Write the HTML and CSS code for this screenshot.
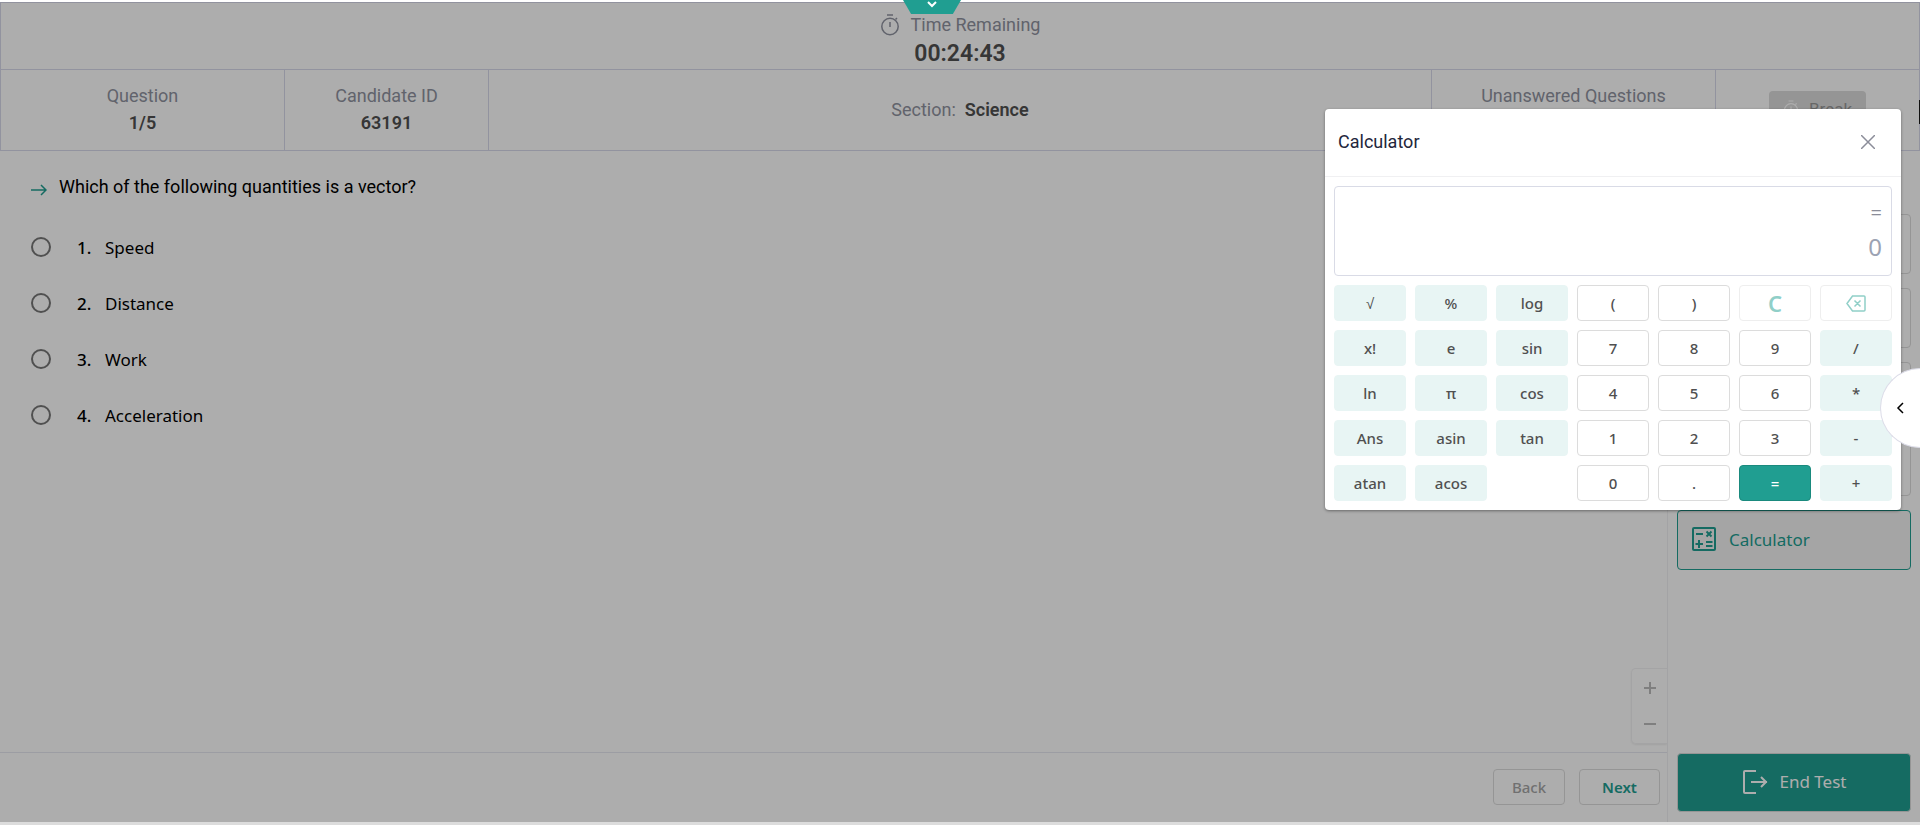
FILE: index.html
```html
<!DOCTYPE html>
<html lang="en">
<head>
  <meta charset="UTF-8" />
  <title>Test - Science</title>
  <link rel="stylesheet" href="styles.css">
</head>
<body>

  <div class="app">
    <header class="header">
      <div class="timer">
        <div class="timer-label">
          <svg width="20" height="22" viewBox="0 0 20 22" fill="none" stroke="currentColor" stroke-width="1.5">
            <path d="M7 1h6M15.5 5.5l1.5-1.5M10 8v5" />
            <circle cx="10" cy="12.5" r="8.2" />
          </svg>
          <span>Time Remaining</span>
        </div>
        <strong class="timer-value">00:24:43</strong>
      </div>
      <div class="info">
        <div class="cell cell-wide"><span>Question</span><strong>1/5</strong></div>
        <div class="cell"><span>Candidate ID</span><strong>63191</strong></div>
        <div class="cell cell-section"><span>Section:</span><strong>Science</strong></div>
        <div class="cell cell-wide"><span>Unanswered Questions</span><strong>5</strong></div>
        <div class="cell">
          <button class="break" type="button" disabled>
            <svg width="16" height="18" viewBox="0 0 20 22" fill="none" stroke="currentColor" stroke-width="1.5">
              <path d="M7 1h6M15.5 5.5l1.5-1.5M10 8v5" />
              <circle cx="10" cy="12.5" r="8.2" />
            </svg>
            <span>Break</span>
          </button>
        </div>
      </div>
    </header>

    <div class="body">
      <main class="main">
        <form class="question">
          <h1>
            <svg width="16" height="12" viewBox="0 0 16 12" fill="none" stroke="currentColor" stroke-width="1.5">
              <path d="M0 6h15M10 1l5 5-5 5" />
            </svg>
            <span>Which of the following quantities is a vector?</span>
          </h1>
          <label class="option"><input type="radio" name="answer"><span class="num">1.</span>Speed</label>
          <label class="option"><input type="radio" name="answer"><span class="num">2.</span>Distance</label>
          <label class="option"><input type="radio" name="answer"><span class="num">3.</span>Work</label>
          <label class="option"><input type="radio" name="answer"><span class="num">4.</span>Acceleration</label>
        </form>
        <div class="zoom">
          <button type="button" aria-label="Zoom in">
            <svg width="12" height="12" viewBox="0 0 12 12" stroke="currentColor" stroke-width="2"><path d="M0 6h12M6 0v12" /></svg>
          </button>
          <button type="button" aria-label="Zoom out">
            <svg width="12" height="12" viewBox="0 0 12 12" stroke="currentColor" stroke-width="2"><path d="M0 6h12" /></svg>
          </button>
        </div>
        <footer class="footer">
          <button class="btn btn-back" type="button">Back</button>
          <button class="btn btn-next" type="button">Next</button>
        </footer>
      </main>

      <aside class="sidebar">
        <button class="tool" type="button" aria-label="Tool 1"></button>
        <button class="tool" type="button" aria-label="Tool 2"></button>
        <button class="tool" type="button" aria-label="Tool 3"></button>
        <button class="tool" type="button" aria-label="Tool 4"></button>
        <button class="tool active" type="button">
          <svg width="24" height="24" viewBox="0 0 24 24" fill="none" stroke="currentColor" stroke-width="2">
            <rect x="1" y="1" width="22" height="22" rx="1" />
            <path d="M4 7h7M14.5 4.5l5 5M19.5 4.5l-5 5M3.500 17H11M7 13v8M14 15h6.500M14 19h6.500" />
          </svg>
          <span>Calculator</span>
        </button>
        <button class="end" type="button">
          <svg width="26" height="26" viewBox="0 0 26 26" fill="none" stroke="currentColor" stroke-width="2">
            <path d="M14 2H3a1 1 0 0 0-1 1v20a1 1 0 0 0 1 1h11M9 13h16M19 8l5 5-5 5" />
          </svg>
          <span>End Test</span>
        </button>
      </aside>
    </div>

    <div class="overlay"></div>
    <span class="marker"></span>

    <section class="calc" aria-label="Calculator">
      <div class="calc-head">
        <h2>Calculator</h2>
        <button class="close" type="button" aria-label="Close">
          <svg width="14" height="14" viewBox="0 0 14 14" stroke="currentColor" stroke-width="1.5"><path d="M0 0l14 14M14 0L0 14" /></svg>
        </button>
      </div>
      <div class="calc-body">
        <div class="display">
          <span class="eq">=</span>
          <output>0</output>
        </div>
        <div class="keys">
          <button class="fn" type="button">√</button>
          <button class="fn" type="button">%</button>
          <button class="fn" type="button">log</button>
          <button type="button">(</button>
          <button type="button">)</button>
          <button class="soft clear" type="button">C</button>
          <button class="soft" type="button" aria-label="Backspace">
            <svg width="20" height="17" viewBox="0 0 20 17" fill="none" stroke="currentColor" stroke-width="1.5">
              <path d="M6.5 1H18a1 1 0 0 1 1 1v13a1 1 0 0 1-1 1H6.5L1 8.5zM8.5 5.5l6 6M14.5 5.5l-6 6" />
            </svg>
          </button>

          <button class="fn" type="button">x!</button>
          <button class="fn" type="button">e</button>
          <button class="fn" type="button">sin</button>
          <button type="button">7</button>
          <button type="button">8</button>
          <button type="button">9</button>
          <button class="fn" type="button">/</button>

          <button class="fn" type="button">ln</button>
          <button class="fn" type="button">π</button>
          <button class="fn" type="button">cos</button>
          <button type="button">4</button>
          <button type="button">5</button>
          <button type="button">6</button>
          <button class="fn" type="button">*</button>

          <button class="fn" type="button">Ans</button>
          <button class="fn" type="button">asin</button>
          <button class="fn" type="button">tan</button>
          <button type="button">1</button>
          <button type="button">2</button>
          <button type="button">3</button>
          <button class="fn" type="button">-</button>

          <button class="fn" type="button">atan</button>
          <button class="fn" type="button">acos</button>
          <span></span>
          <button type="button">0</button>
          <button type="button">.</button>
          <button class="equals" type="button">=</button>
          <button class="fn" type="button">+</button>
        </div>
      </div>
    </section>

    <button class="drawer" type="button" aria-label="Open panel">
      <svg width="8" height="12" viewBox="0 0 8 12" fill="none" stroke="currentColor" stroke-width="1.5"><path d="M7 1L2 6l5 5" /></svg>
    </button>
  </div>

  <button class="tab" type="button" aria-label="Expand">
    <svg width="12" height="8" viewBox="0 0 12 8" fill="none" stroke="currentColor" stroke-width="2"><path d="M2 2l4 4 4-4" /></svg>
  </button>

</body>
</html>
```

FILE: styles.css
```css
* {
  box-sizing: border-box;
}
body {
  margin: 0;
  min-height: 100vh;
  display: flex;
  flex-direction: column;
  padding-bottom: 3px;
  border-top: 2px solid #fff;
  background: #dcdcdc;
  color: #000;
  font-family: "Segoe UI", "Noto Sans", sans-serif;
  font-size: 17px;
}
button {
  font: inherit;
  cursor: pointer;
}
.app {
  position: relative;
  flex: 1;
  display: flex;
  flex-direction: column;
  overflow: hidden;
  background: #fff;
}

/* header */
.header {
  border: 1px solid #d7d9eb;
  font-family: Roboto, sans-serif;
  font-size: 18px;
  line-height: 27px;
  color: #9093a0;
}
.header strong {
  color: #505050;
  font-weight: 600;
}
.timer {
  height: 67px;
  padding-top: 8px;
  display: flex;
  flex-direction: column;
  align-items: center;
  border-bottom: 1px solid #d7d9eb;
}
.timer-label {
  display: flex;
  align-items: center;
  gap: 11px;
}
.timer .timer-value {
  font-size: 23px;
  line-height: 32px;
}
.info {
  display: flex;
  height: 80px;
}
.cell {
  width: 204px;
  display: flex;
  flex-direction: column;
  align-items: center;
  justify-content: center;
  padding-bottom: 2px;
  border-left: 1px solid #d7d9eb;
}
.cell-wide {
  width: 284px;
}
.cell:first-child {
  width: 283px;
  border-left: 0;
}
.cell-section {
  flex: 1;
  flex-direction: row;
  align-items: center;
  gap: 9px;
}
.break {
  width: 97px;
  height: 36px;
  display: flex;
  align-items: center;
  justify-content: center;
  gap: 10px;
  padding: 0;
  border: 0;
  border-radius: 4px;
  background: #dcdcdc;
  color: #fff;
  font-size: 17px;
}
.break span {
  color: #999;
}

/* question */
.body {
  flex: 1;
  display: flex;
}
.main {
  flex: 1;
  display: flex;
  flex-direction: column;
}
.question {
  flex: 1;
  padding: 22px 31px;
}
.question h1 {
  display: flex;
  align-items: center;
  gap: 12px;
  margin: 0 0 18px;
  font: 18px/28px Roboto, sans-serif;
}
.question h1 svg {
  color: #209e91;
  margin-top: 6px;
}
.option {
  display: flex;
  align-items: center;
  height: 56px;
}
.option input {
  appearance: none;
  width: 20px;
  height: 20px;
  margin: 0 26px 0 0;
  border: 2px solid #777;
  border-radius: 50%;
}
.option .num {
  width: 28px;
  font-weight: 500;
}
.zoom {
  align-self: flex-end;
  width: 36px;
  margin-bottom: 8px;
  padding: 1px 0;
  border: 1px solid #f2f2f4;
  border-right: 0;
  border-radius: 5px 0 0 5px;
  box-shadow: 0 1px 2px #eee;
}
.zoom button {
  display: flex;
  align-items: center;
  justify-content: center;
  width: 100%;
  height: 36px;
  padding: 0;
  border: 0;
  background: none;
  color: #bbb;
}
.footer {
  display: flex;
  justify-content: flex-end;
  gap: 14px;
  padding: 16px 7px 17px;
  border-top: 1px solid #e6e7f0;
}
.btn {
  height: 36px;
  width: 72px;
  padding: 0;
  border: 1px solid #dcdcdc;
  border-radius: 4px;
  background: #fff;
  font-size: 15px;
  font-weight: 500;
}
.btn-back {
  color: #a6a6a6;
}
.btn-next {
  width: 81px;
  color: #209e91;
  font-weight: 600;
}

/* sidebar */
.sidebar {
  width: 253px;
  display: flex;
  flex-direction: column;
  gap: 14px;
  padding: 63px 9px 10px;
  border-left: 1px solid #f0f0f4;
}
.tool {
  height: 60px;
  display: flex;
  align-items: center;
  gap: 13px;
  padding: 0 14px 2px;
  border: 1px solid #dcdcdc;
  border-radius: 4px;
  background: #fff;
}
.tool.active {
  border-color: #209e91;
  background: #f4f4f4;
  color: #209e91;
}
.end {
  height: 59px;
  margin-top: auto;
  display: flex;
  align-items: center;
  justify-content: center;
  gap: 12px;
  padding: 0 0 2px;
  border: 1px solid #dcdcdc;
  border-radius: 4px;
  background: #209e91;
  color: #fff;
}
.overlay {
  position: absolute;
  inset: 0;
  background: rgba(0, 0, 0, 0.32);
}
.marker {
  position: absolute;
  top: 98px;
  right: 0;
  width: 1px;
  height: 24px;
  background: #111;
}

/* calculator */
.calc {
  position: absolute;
  top: 107px;
  right: 19px;
  width: 576px;
  border-radius: 4px;
  background: #fff;
  box-shadow: 0 1px 3px rgba(0, 0, 0, 0.4);
}
.calc-head {
  display: flex;
  align-items: center;
  justify-content: space-between;
  height: 68px;
  padding: 0 20px 2px 13px;
  border-bottom: 1px solid #f0f0f2;
}
.calc-head h2 {
  margin: 0;
  font: 18px/28px Roboto, sans-serif;
  color: #23263b;
}
.close {
  display: flex;
  padding: 6px;
  border: 0;
  background: none;
  color: #8b8d99;
}
.calc-body {
  padding: 9px;
}
.display {
  display: flex;
  flex-direction: column;
  align-items: flex-end;
  height: 90px;
  padding: 9px;
  margin-bottom: 9px;
  border: 1px solid #d9dbe6;
  border-radius: 4px;
  color: #9ca3b3;
  font-size: 24px;
  line-height: 34px;
}
.display .eq {
  font-size: 20px;
  color: #8b8d99;
}
.keys {
  display: grid;
  grid-template-columns: repeat(7, 1fr);
  gap: 9px;
}
.keys button {
  display: flex;
  align-items: center;
  justify-content: center;
  height: 36px;
  padding: 0;
  border: 1px solid #dcdcdc;
  border-radius: 4px;
  background: #fff;
  color: #505050;
  font-size: 15px;
  font-weight: 500;
}
.keys .fn {
  border-color: #e8f5f4;
  background: #e8f5f4;
}
.keys .soft {
  border-color: #eee;
  color: #90cfc8;
}
.keys .clear {
  font-size: 22px;
  font-weight: 600;
}
.keys .equals {
  border-color: #1a8a7e;
  background: #209e91;
  color: #fff;
}

/* floating handles */
.drawer {
  position: absolute;
  top: 366px;
  right: 0;
  width: 40px;
  height: 80px;
  padding: 0 0 2px 15px;
  border: 1px solid #dcdce8;
  border-right: 0;
  border-radius: 40px 0 0 40px;
  background: #fff;
  color: #000;
  text-align: left;
}
.tab {
  position: absolute;
  top: 0;
  left: calc(50% - 57px);
  width: 58px;
  height: 14px;
  display: flex;
  justify-content: center;
  padding: 0;
  border: 0;
  background: #209e91;
  color: #fff;
  clip-path: polygon(0 0, 100% 0, 86% 100%, 14% 100%);
}
```
